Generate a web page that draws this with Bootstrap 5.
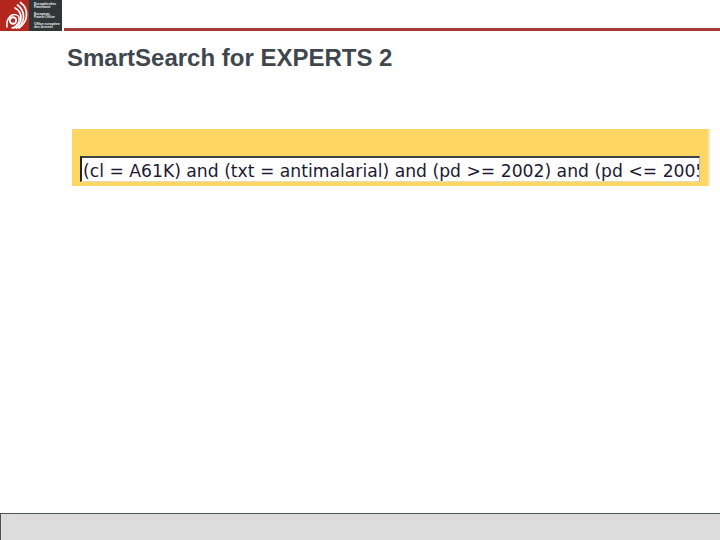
<!DOCTYPE html>
<html lang="en">
<head>
<meta charset="utf-8"/>
<meta content="width=device-width, initial-scale=1.0" name="viewport"/>
<title>Smart Search for Experts</title>
<link href="https://cdn.jsdelivr.net/npm/bootstrap@5.3.2/dist/css/bootstrap.min.css" rel="stylesheet"/>
<style>
    html, body { height: 100%; }
    body {
      background: #fff;
      overflow: hidden;
      font-family: "Liberation Sans", Arial, sans-serif;
    }
    .slide { height: 540px; }
    .logo-box {
      width: 62px;
      height: 31px;
      background: #2f3638;
    }
    .logo-mark { width: 29px; height: 31px; background: #b5261e; }
    .logo-text {
      color: #eceeee;
      font-size: 3.4px;
      font-weight: 700;
      line-height: 3.5px;
      padding: 2.5px 0 0 5px;
      white-space: nowrap;
    }
    .logo-text p { margin: 0 0 3px; }
    .top-rule {
      height: 3px;
      margin-top: 28px;
      margin-left: 2px;
      background: #a33a36;
    }
    .slide-title {
      color: #3f474e;
      font-size: 24px;
      font-weight: 700;
      line-height: 26px;
      margin: 14px 0 0 67px;
    }
    .query-band {
      width: 636px;
      height: 57px;
      margin: 58px 0 0 72px;
      background: #fdd663;
      padding: 27px 8px 0 8px;
      box-shadow: 2px 0 0 #fde9b0;
    }
    .query-box {
      height: 26px;
      background: #fff;
      border: 1px solid #b9bcbc;
      border-top: 2px solid #3d4348;
      border-left: 2px solid #222;
      border-bottom-color: #e6dcb4;
      color: #1c1a33;
      font-family: "DejaVu Sans", Verdana, sans-serif;
      font-size: 17.2px;
      line-height: 26px;
      padding-left: 1px;
      overflow: hidden;
      white-space: nowrap;
    }
    .foot-bar {
      height: 27px;
      background: #dcdcdc;
      border-top: 1px solid #4b5358;
      border-left: 1px solid #4b5358;
    }
</style>
</head>
<body>
<div class="slide d-flex flex-column">
  <div class="d-flex">
    <div class="logo-box d-flex flex-shrink-0">
      <div class="logo-mark flex-shrink-0">
        <svg width="29" height="31" viewBox="0 0 29 31" fill="none" stroke="#fff" stroke-linecap="round">
          <circle cx="13" cy="20.500" r="3.200" stroke-width="1.900"/>
          <path d="M7 27c-1-5 1-10 5-12 3-1 6 0 7 2 1 5-2 9-7 11" stroke-width="1.500"/>
          <path d="M15 8c4 2 6 6 6 10 0 4-3 8-7 10" stroke-width="1.700"/>
          <path d="M17.500 5c4 3 6.500 8 6 13-.5 4-3 8-7 10" stroke-width="1.700"/>
          <path d="M20.500 2.500c4 3 6.500 8 6 13.500-.5 5-3.500 9-7.500 12" stroke-width="1.700"/>
        </svg>
      </div>
      <div class="logo-text">
        <p>Europäisches<br/>Patentamt</p>
        <p>European<br/>Patent Office</p>
        <p>Office européen<br/>des brevets</p>
      </div>
    </div>
    <div class="top-rule flex-grow-1"></div>
  </div>
  <h1 class="slide-title">SmartSearch for EXPERTS 2</h1>
  <div class="query-band">
    <div class="query-box">(cl = A61K) and (txt = antimalarial) and (pd &gt;= 2002) and (pd &lt;= 2005)</div>
  </div>
  <div class="foot-bar mt-auto"></div>
</div>
<script src="https://cdn.jsdelivr.net/npm/bootstrap@5.3.2/dist/js/bootstrap.bundle.min.js"></script>
</body>
</html>
